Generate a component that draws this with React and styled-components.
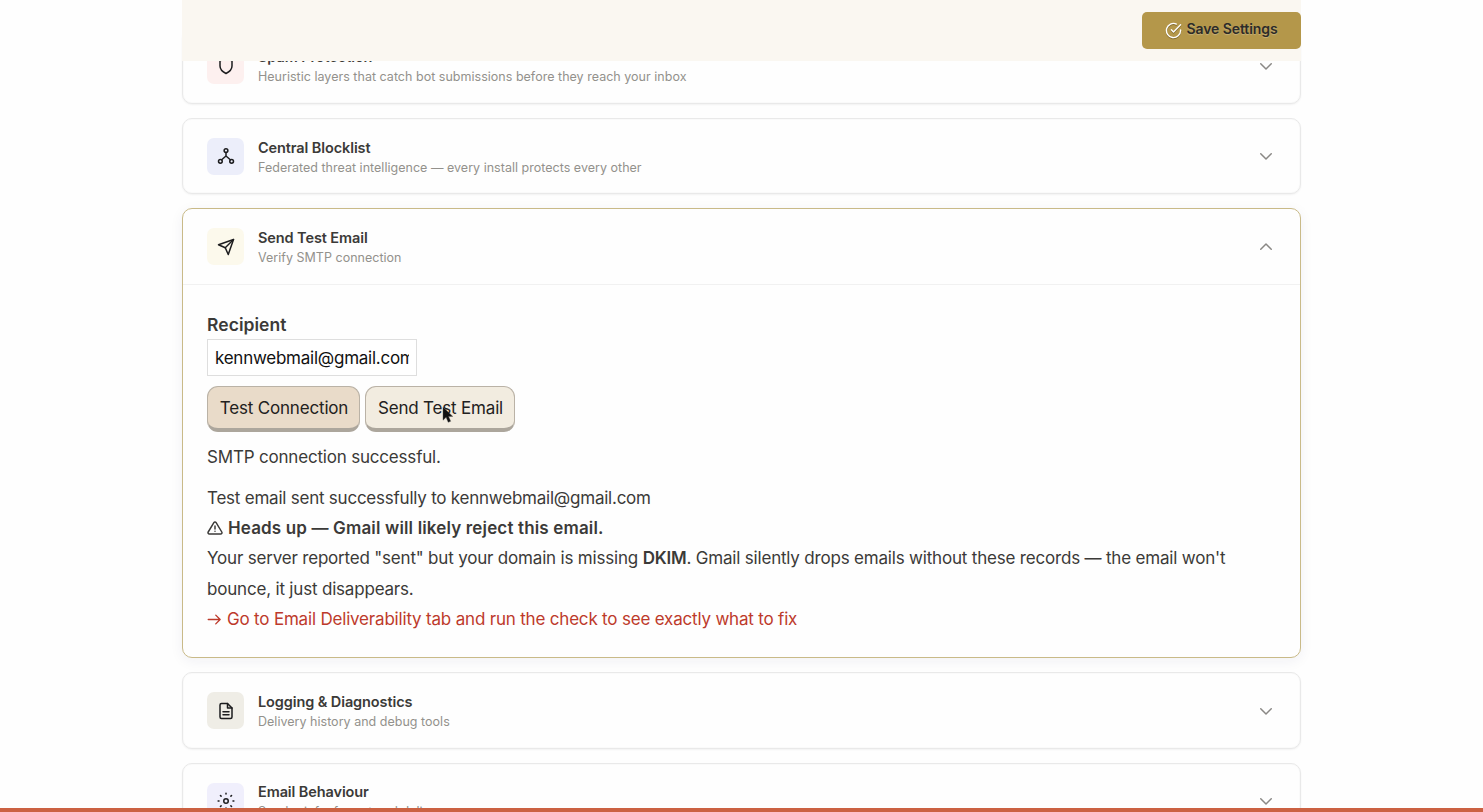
import React from 'react'
import styled, { createGlobalStyle } from 'styled-components'

const ShieldIcon = () => (
    <Icon viewBox='0 0 24 24'>
        <path d='M12 22s8-4 8-10V5l-8-3-8 3v7c0 6 8 10 8 10z' />
    </Icon>
)

const NodesIcon = () => (
    <Icon viewBox='0 0 24 24'>
        <circle cx='12' cy='4.8' r='2.5' />
        <circle cx='4.5' cy='19' r='2.5' />
        <circle cx='19.5' cy='19' r='2.5' />
        <path d='M12 7.3V12M12 12l-5.8 5M12 12l5.8 5' />
    </Icon>
)

const SendIcon = () => (
    <Icon viewBox='0 0 24 24'>
        <path d='M22 2L11 13' />
        <path d='M22 2l-7 20-4-9-9-4 20-7z' />
    </Icon>
)

const FileIcon = () => (
    <Icon viewBox='0 0 24 24'>
        <path d='M14 2H6a2 2 0 0 0-2 2v16a2 2 0 0 0 2 2h12a2 2 0 0 0 2-2V8z' />
        <path d='M14 2v6h6M16 13H8M16 17H8' />
    </Icon>
)

const SunIcon = () => (
    <Icon viewBox='0 0 24 24'>
        <circle cx='12' cy='12' r='3' />
        <path d='M12 1.5v1.2M12 21.3v1.2M4.6 4.6l.9.9M18.5 18.5l.9.9M1.5 12h1.2M21.3 12h1.2M4.6 19.4l.9-.9M18.5 5.5l.9-.9' />
    </Icon>
)

const Section = ({ icon, tint, title, text, open, children }) => (
    <Card $open={open}>
        <CardHead $open={open}>
            <IconBox $tint={tint}>{icon}</IconBox>
            <Titles>
                <Title>{title}</Title>
                <Subtitle>{text}</Subtitle>
            </Titles>
            <Chevron viewBox='0 0 24 24' $open={open}>
                <path d='M5 9l7 7 7-7' />
            </Chevron>
        </CardHead>
        {children}
    </Card>
)

const App = () => (
    <Page>
        <GlobalStyle />
        <TopBar>
            <SaveButton>
                <SaveIcon viewBox='0 0 24 24'>
                    <path d='M22 11.08V12a10 10 0 1 1-5.93-9.14' />
                    <path d='M22 4L12 14.01l-3-3' />
                </SaveIcon>
                Save Settings
            </SaveButton>
        </TopBar>
        <List>
            <Section
                icon={<ShieldIcon />}
                tint='#fdf0ef'
                title='Spam Protection'
                text='Heuristic layers that catch bot submissions before they reach your inbox'
            />
            <Section
                icon={<NodesIcon />}
                tint='#eceefa'
                title='Central Blocklist'
                text='Federated threat intelligence — every install protects every other'
            />
            <Section
                open
                icon={<SendIcon />}
                tint='#fcf9ec'
                title='Send Test Email'
                text='Verify SMTP connection'
            >
                <Body>
                    <Label htmlFor='recipient'>Recipient</Label>
                    <Input id='recipient' defaultValue='kennwebmail@gmail.com' />
                    <Buttons>
                        <Button $width={153} $color='#e9dbc9'>Test Connection</Button>
                        <Button $width={150} $color='#f2ece0'>
                            Send Test Email
                            <Cursor viewBox='0 0 12 18'>
                                <path d='M1 1v13.2l3.1-2.9 2.1 5 2.5-1-2.1-4.9h4.2z' />
                            </Cursor>
                        </Button>
                    </Buttons>
                    <Status>SMTP connection successful.</Status>
                    <Result>
                        <Line $spacing='-.23px'>Test email sent successfully to kennwebmail@gmail.com</Line>
                        <Line $bold $spacing='.15px'>
                            <WarnIcon viewBox='0 0 24 24'>
                                <path d='M10.3 3.9L1.8 18a2 2 0 0 0 1.7 3h17a2 2 0 0 0 1.7-3L13.7 3.9a2 2 0 0 0-3.4 0z' />
                                <path d='M12 9v4.5M12 17h.01' />
                            </WarnIcon>
                            Heads up — Gmail will likely reject this email.
                        </Line>
                        <Line>
                            Your server reported "sent" but your domain is missing <b>DKIM</b>. Gmail silently drops emails without these records — the email won't
                            <br />
                            bounce, it just disappears.
                        </Line>
                        <Line $warn>
                            <ArrowIcon viewBox='0 0 24 24'>
                                <path d='M2 12h19M14 5l7 7-7 7' />
                            </ArrowIcon>
                            Go to Email Deliverability tab and run the check to see exactly what to fix
                        </Line>
                    </Result>
                </Body>
            </Section>
            <Section
                icon={<FileIcon />}
                tint='#efede6'
                title='Logging & Diagnostics'
                text='Delivery history and debug tools'
            />
            <Section
                icon={<SunIcon />}
                tint='#f0effc'
                title='Email Behaviour'
                text='Sender info, format and delivery'
            />
        </List>
        <BottomStrip />
    </Page>
)

export default App

const GlobalStyle = createGlobalStyle`
    * {
        box-sizing: border-box;
    }

    body {
        margin: 0;
        background: #fefefe;
        color: #3b3a38;
        font-family: Inter, 'Liberation Sans', sans-serif;
    }
`

const Page = styled.div`
    display: flex;
    flex-direction: column;
    height: 812px;
    overflow: hidden;
`

const TopBar = styled.header`
    position: relative;
    z-index: 1;
    display: flex;
    flex: none;
    justify-content: flex-end;
    width: 1119px;
    height: 61px;
    margin: 0 auto;
    padding-top: 11.5px;
    background: #faf7f1;
`

const SaveButton = styled.button`
    display: flex;
    align-items: center;
    justify-content: center;
    gap: 4px;
    width: 159px;
    height: 37px;
    padding: 0 0 4px;
    border: 0;
    border-radius: 5px;
    background: #b4974a;
    color: #2c2b28;
    font: 600 14px Inter, sans-serif;
    letter-spacing: -.08px;
    text-shadow: 0 1px 1px rgba(255, 255, 255, .25);
`

const SaveIcon = styled.svg`
    width: 17px;
    height: 17px;
    margin-top: 5px;
    fill: none;
    stroke: #fff;
    stroke-width: 1.9;
    stroke-linecap: round;
    stroke-linejoin: round;
    filter: drop-shadow(0 1px 0 rgba(60, 45, 10, .4));
`

const List = styled.main`
    display: flex;
    flex: 1;
    flex-direction: column;
    gap: 14px;
    width: 1119px;
    min-height: 0;
    margin: -33.3px auto 0;
`

const Card = styled.section`
    flex: none;
    border: 1px solid ${p => p.$open ? '#c9ba88' : '#e9e9e9'};
    border-radius: 10px;
    background: #fefefe;
    box-shadow: ${p => p.$open
        ? '0 3px 14px rgba(40, 40, 80, .06)'
        : '0 1px 2px rgba(0, 0, 0, .05), inset 0 0 0 1px rgba(0, 0, 0, .015)'};
`

const CardHead = styled.div`
    display: flex;
    align-items: center;
    height: ${p => p.$open ? '76px' : '74.4px'};
    padding: 0 25px 0 24px;
    border-bottom: ${p => p.$open ? '1px solid #f1f1f1' : '0'};
`

const IconBox = styled.div`
    display: flex;
    align-items: center;
    justify-content: center;
    width: 37px;
    height: 37px;
    margin-right: 14px;
    border-radius: 7px;
    background: ${p => p.$tint};
`

const Icon = styled.svg`
    width: 18px;
    height: 18px;
    fill: none;
    stroke: #1d1d1f;
    stroke-width: 2;
    stroke-linecap: round;
    stroke-linejoin: round;
`

const Titles = styled.div`
    flex: 1;
    padding-top: 2.6px;
    white-space: nowrap;
`

const Title = styled.div`
    font-size: 14.5px;
    font-weight: 600;
    line-height: 20px;
    letter-spacing: -.1px;
`

const Subtitle = styled.div`
    color: #93918c;
    font-size: 12.5px;
    line-height: 20px;
    letter-spacing: .02px;
`

const Chevron = styled.svg`
    width: 18px;
    height: 18px;
    fill: none;
    stroke: #8a8885;
    stroke-width: 2;
    stroke-linecap: round;
    stroke-linejoin: round;
    transform: ${p => p.$open ? 'rotate(180deg)' : 'none'};
`

const Body = styled.div`
    height: 372px;
    padding: 24.3px 24px 24px;
    font-size: 17px;
    line-height: 30.3px;
    letter-spacing: -.19px;
`

const Label = styled.label`
    display: block;
    font-size: 17.5px;
    font-weight: 600;
    letter-spacing: .05px;
`

const Input = styled.input`
    display: block;
    width: 210px;
    height: 37px;
    margin-top: -1px;
    padding: 0 7px;
    border: 1px solid #dedede;
    background: #fff;
    color: #111;
    font: 17px Inter, sans-serif;
    letter-spacing: -.25px;
    outline: none;
`

const Buttons = styled.div`
    display: flex;
    gap: 5px;
    margin-top: 10px;
`

const Button = styled.button`
    position: relative;
    width: ${p => p.$width}px;
    height: 46px;
    padding: 1px 0 0 1px;
    border: 1px solid #bab2a6;
    border-bottom: 4px solid #aca69c;
    border-radius: 11px;
    background: ${p => p.$color};
    color: #222120;
    font: 17px Inter, sans-serif;
    letter-spacing: -.18px;
    white-space: nowrap;
`

const Cursor = styled.svg`
    position: absolute;
    top: 19px;
    left: 75.5px;
    width: 12px;
    height: 18px;
    fill: #111;
    stroke: #555;
    stroke-width: .4;
`

const Status = styled.div`
    margin-top: 10px;
`

const Result = styled.div`
    margin-top: 10.5px;
`

const Line = styled.div`
    color: ${p => p.$warn ? '#bd3a2b' : 'inherit'};
    font-weight: ${p => p.$bold ? 600 : 400};
    letter-spacing: ${p => p.$spacing || '-.19px'};
    white-space: nowrap;

    b {
        font-weight: 600;
    }
`

const WarnIcon = styled.svg`
    width: 16px;
    height: 16px;
    margin-right: 5px;
    vertical-align: -2px;
    fill: none;
    stroke: currentColor;
    stroke-width: 2.2;
    stroke-linecap: round;
    stroke-linejoin: round;
`

const ArrowIcon = styled(WarnIcon)`
    width: 15px;
    height: 15px;
`

const BottomStrip = styled.div`
    position: relative;
    z-index: 1;
    flex: none;
    height: 4px;
    background: #cb6142;
`
